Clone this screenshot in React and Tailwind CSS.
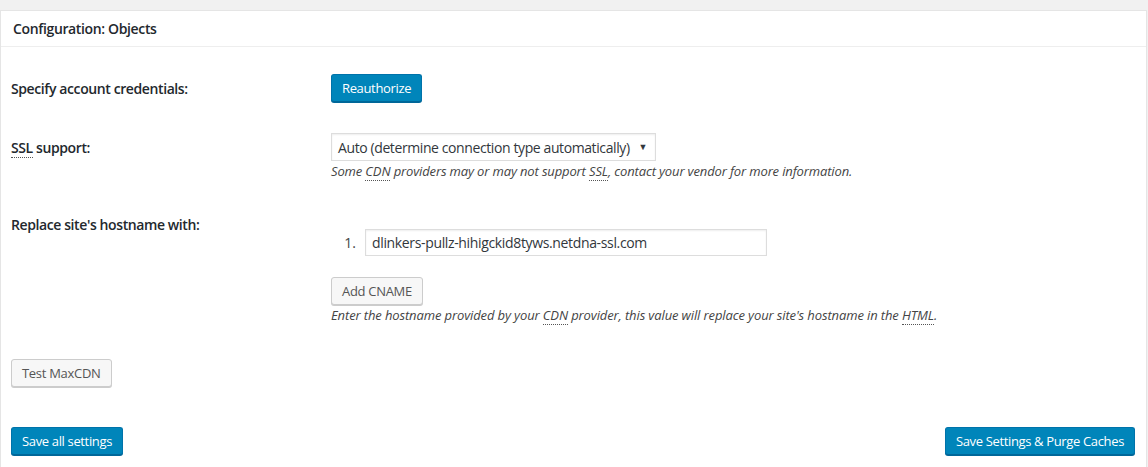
const Abbr = ({ children }) => (
    <abbr className="no-underline border-b border-dotted border-[#555] leading-none">{children}</abbr>
);

const PrimaryButton = ({ children }) => (
    <button className="h-[28px] px-[10px] pb-px rounded-[3px] border border-[#0073aa] border-b-[#006799] bg-[#0085ba] text-white text-[13px] leading-[26px] tracking-[-0.35px] shadow-[0_1px_0_#006799]">
        {children}
    </button>
);

const SecondaryButton = ({ children }) => (
    <button className="h-[28px] px-[10px] pb-px rounded-[3px] border border-[#cccccc] bg-[#f7f7f7] text-[#555555] text-[13px] leading-[26px] tracking-[-0.3px] shadow-[0_1px_0_#cccccc]">
        {children}
    </button>
);

const Row = ({ label, top, children, className = "" }) => (
    <div className={`flex ${top ? "items-start" : "items-center"} ${className}`}>
        <div className="w-[320px] shrink-0 text-[14px] font-semibold tracking-[-0.4px] text-[#23282d]">{label}</div>
        <div className="flex-1">{children}</div>
    </div>
);

export default function App() {
    return (
        <div className="w-[1148px] h-[467px] overflow-hidden bg-[#f1f1f1] pt-[10px] font-['Open_Sans',sans-serif] text-[#444444]">
            <div className="w-[1147px] h-[457px] bg-white border border-b-0 border-[#e5e5e5]">
                <div className="h-[36px] border-b border-[#eeeeee] pl-[12px] flex items-center text-[14px] font-semibold tracking-[-0.36px] text-[#23282d]">
                    Configuration: Objects
                </div>

                <div className="pl-[10px]">
                    <Row label="Specify account credentials:" className="mt-[27px]">
                        <PrimaryButton>Reauthorize</PrimaryButton>
                    </Row>

                    <Row
                        label={
                            <span>
                                <Abbr>SSL</Abbr> support:
                            </span>
                        }
                        className="mt-[31px]"
                    >
                        <div className="h-[28px] w-[325px] border border-[#dddddd] shadow-[inset_0_1px_2px_rgba(0,0,0,0.07)] flex items-center justify-between pl-[6px] pr-[8px] text-[14px] tracking-[-0.4px] text-[#32373c] whitespace-nowrap">
                            <span>Auto (determine connection type automatically)</span>
                            <span className="text-[9px]">▼</span>
                        </div>
                    </Row>
                    <div className="pl-[320px] mt-[1px] text-[13px] italic tracking-[-0.14px] text-[#444444]">
                        Some <Abbr>CDN</Abbr> providers may or may not support <Abbr>SSL</Abbr>, contact your vendor for more information.
                    </div>

                    <Row label="Replace site's hostname with:" top className="mt-[32px]">
                        <ol className="mt-[15px]">
                            <li className="flex items-center">
                                <span className="w-[34px] text-right pr-[9px] text-[14px] text-[#444444]">1.</span>
                                <div className="h-[27px] w-[402px] border border-[#dddddd] shadow-[inset_0_1px_2px_rgba(0,0,0,0.07)] flex items-center pl-[6px] text-[14px] tracking-[-0.35px] text-[#32373c] whitespace-nowrap">
                                    dlinkers-pullz-hihigckid8tyws.netdna-ssl.com
                                </div>
                            </li>
                        </ol>
                        <div className="mt-[21px]">
                            <SecondaryButton>Add CNAME</SecondaryButton>
                        </div>
                        <div className="mt-[1px] text-[13px] italic tracking-[-0.12px] text-[#444444]">
                            Enter the hostname provided by your <Abbr>CDN</Abbr> provider, this value will replace your site's hostname in the <Abbr>HTML</Abbr>.
                        </div>
                    </Row>

                    <div className="mt-[34px]">
                        <SecondaryButton>Test MaxCDN</SecondaryButton>
                    </div>

                    <div className="mt-[40px] flex justify-between pr-[11px]">
                        <PrimaryButton>Save all settings</PrimaryButton>
                        <PrimaryButton>Save Settings &amp; Purge Caches</PrimaryButton>
                    </div>
                </div>
            </div>
        </div>
    );
}
